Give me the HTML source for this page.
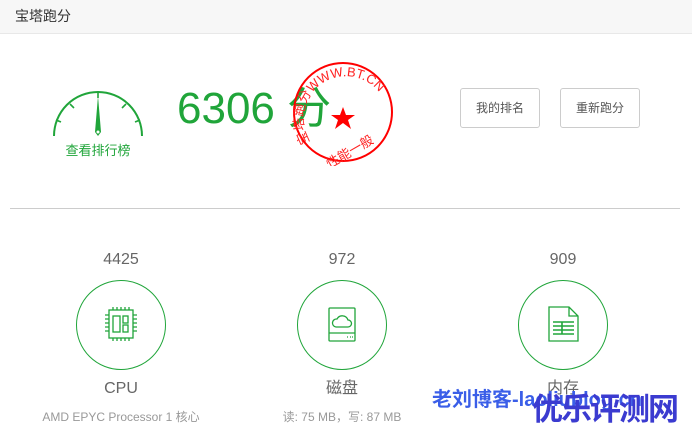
<!DOCTYPE html>
<html><head><meta charset="utf-8"><style>
*{margin:0;padding:0;box-sizing:border-box}
html,body{width:692px;height:438px}
body{background:#fff;font-family:"Liberation Sans","Noto Sans CJK SC",sans-serif;position:relative;overflow:hidden}
.hd{position:absolute;left:0;top:0;width:692px;height:34px;background:#f7f7f7;border-bottom:1px solid #e8e8e8;font-size:14px;color:#333;line-height:33px;padding-left:15px}
.abs{position:absolute;white-space:nowrap}
.btn{position:absolute;top:88px;width:80px;height:40px;border:1px solid #ccc;border-radius:3px;font-size:12px;color:#555;text-align:center;line-height:38px;background:#fff}
.num{position:absolute;top:250px;width:120px;text-align:center;font-size:16px;line-height:20px;color:#666}
.circ{position:absolute;top:280px;width:90px;height:90px;border:1px solid #20a53a;border-radius:50%}
.lab{position:absolute;top:378px;width:200px;text-align:center;font-size:16px;line-height:22px;height:22px;color:#666}
.sub{position:absolute;top:409px;width:240px;text-align:center;font-size:12px;line-height:16px;color:#999}
</style></head><body>
<div class="hd">宝塔跑分</div>
<svg class="abs" style="left:50px;top:80px" width="100" height="60" viewBox="0 0 100 60">
<path d="M4,56 A44,44 0 0 1 92,56" fill="none" stroke="#20a53a" stroke-width="2"/>
<g stroke="#20a53a" stroke-width="1.6">
<line x1="48" y1="12" x2="48" y2="18"/>
<line x1="20" y1="24" x2="24" y2="28"/><line x1="76" y1="24" x2="72" y2="28"/>
<line x1="6" y1="40" x2="11" y2="42"/><line x1="90" y1="40" x2="85" y2="42"/>
</g>
<path d="M48,16 L51,52 L48,56 L45,52 Z" fill="#20a53a"/>
<circle cx="48" cy="52" r="1.5" fill="#fff"/>
</svg>
<div class="abs" style="left:48px;top:142px;width:100px;text-align:center;font-size:13px;line-height:18px;color:#20a53a">查看排行榜</div>
<div class="abs" style="left:177px;top:84px;font-size:44px;color:#20a53a;line-height:50px">6306 分</div>
<svg class="abs" style="left:290px;top:60px" width="106" height="106" viewBox="0 0 106 106">
<circle cx="53" cy="52" r="49" fill="none" stroke="#f00" stroke-width="2"/>
<defs><path id="arc" d="M20,82 A40,40 0 0 1 92,36"/></defs>
<text font-size="13" fill="#f22" font-family="Liberation Sans,Noto Sans CJK SC,sans-serif"><textPath href="#arc">宝塔跑分WWW.BT.CN</textPath></text>
<polygon points="53,47 56,55 65,55 58,60 61,69 53,63 45,69 48,60 41,55 50,55" fill="#f00"/>
<text x="60" y="96" font-size="13" fill="#f22" text-anchor="middle" transform="rotate(-30 60 92)" font-family="Liberation Sans,Noto Sans CJK SC,sans-serif">性能一般</text>
</svg>
<div class="btn" style="left:460px">我的排名</div>
<div class="btn" style="left:560px">重新跑分</div>
<div class="abs" style="left:10px;top:208px;width:670px;height:1px;background:#ccc"></div>
<div class="num" style="left:61px">4425</div>
<div class="num" style="left:282px">972</div>
<div class="num" style="left:503px">909</div>
<div class="circ" style="left:76px"></div>
<div class="circ" style="left:297px"></div>
<div class="circ" style="left:518px"></div>
<svg class="abs" style="left:104px;top:306px" width="34" height="38" viewBox="0 0 34 38" fill="none" stroke="#20a53a" stroke-width="1.3">
<rect x="5" y="4" width="24" height="28"/><rect x="9" y="10" width="7" height="16"/><rect x="19" y="10" width="5" height="7"/><rect x="19" y="19" width="5" height="7"/>
<path d="M9,1v3M13,1v3M17,1v3M21,1v3M25,1v3M9,32v3M13,32v3M17,32v3M21,32v3M25,32v3M1,9h4M1,13h4M1,17h4M1,21h4M1,25h4M29,9h4M29,13h4M29,17h4M29,21h4M29,25h4"/>
</svg>
<svg class="abs" style="left:327px;top:307px" width="32" height="36" viewBox="0 0 32 36" fill="none" stroke="#20a53a" stroke-width="1.3">
<rect x="2" y="1" width="26" height="33" rx="1"/><line x1="2" y1="26" x2="28" y2="26"/>
<path d="M9,20 a4,4 0 0 1 1,-8 a6,6 0 0 1 11,1 a3.5,3.5 0 0 1 0,7 Z"/>
<path d="M20,30h1M23,30h1M25,30h1"/>
</svg>
<svg class="abs" style="left:548px;top:306px" width="32" height="36" viewBox="0 0 32 36" fill="none" stroke="#20a53a" stroke-width="1.3">
<path d="M1,1 H21 L30,10 V35 H1 Z M21,1 V10 H30"/>
<path d="M5,16h21M5,20h21M5,24h21M5,28h21M14,16v12" stroke-width="1.6"/>
</svg>
<div class="lab" style="left:21px">CPU</div>
<div class="lab" style="left:242px">磁盘</div>
<div class="lab" style="left:463px">内存</div>
<div class="sub" style="left:1px">AMD EPYC Processor 1 核心</div>
<div class="sub" style="left:222px">读: 75 MB，写: 87 MB</div>
<div class="abs" style="left:432px;top:386px;font-size:20px;line-height:28px;font-weight:bold;color:#3a5ee8">老刘博客-laoliublog.cn</div>
<div class="abs" style="left:532px;top:391px;font-size:31px;line-height:38px;font-weight:bold;color:#3b3bd0;letter-spacing:-2px">优乐评测网</div>
</body></html>
